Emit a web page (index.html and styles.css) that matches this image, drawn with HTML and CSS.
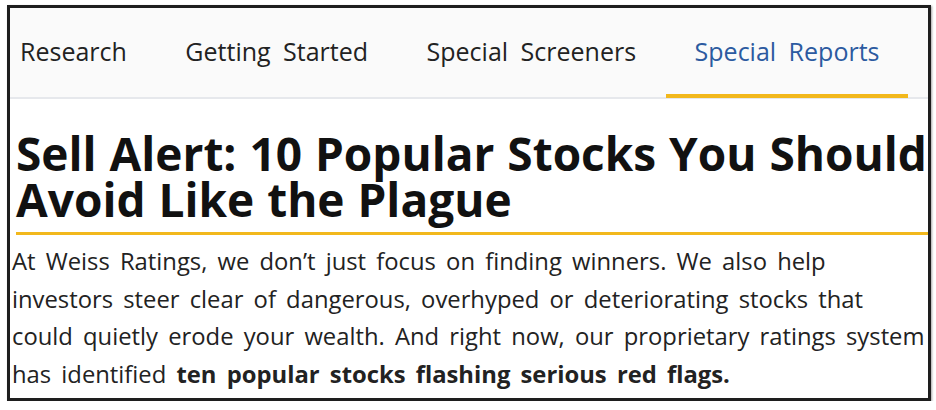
FILE: index.html
```html
<!DOCTYPE html>
<html lang="en">
<head>
    <meta charset="UTF-8">
    <meta name="viewport" content="width=device-width, initial-scale=1.0">
    <title>Sell Alert</title>
    <link rel="stylesheet" href="styles.css">
</head>
<body>

<div class="frame">
    <!-- верхнє меню -->
    <nav class="nav">
        <a class="tab" href="#">Research</a>
        <a class="tab" href="#">Getting Started</a>
        <a class="tab" href="#">Special Screeners</a>
        <a class="tab active" href="#">Special Reports</a>
    </nav>

    <h1 class="title">Sell Alert: 10 Popular Stocks You Should Avoid Like the Plague</h1>

    <p class="intro">At Weiss Ratings, we don’t just focus on finding winners. We also help investors steer clear of dangerous, overhyped or deteriorating stocks that could quietly erode your wealth. And right now, our proprietary ratings system has identified <strong>ten popular stocks flashing serious red flags.</strong></p>
</div>

</body>
</html>
```

FILE: styles.css
```css
body {
    margin: 0;
    background-color: #FFFFFF;
    font-family: "Open Sans", "Noto Sans", sans-serif;
}
.frame {
    margin: 5px 0 0 7px;
    width: 918px;
    height: 390px;
    border: 3px solid #1E1E1E;
    box-shadow: 1px 1px 2px rgba(0, 0, 0, 0.35);
    overflow: hidden;
}
.nav {
    display: flex;
    gap: 58.5px;
    height: 89px;
    padding-left: 10px;
    background-color: #FAFAFA;
    border-bottom: 2px solid #E6E8EC;
}
.tab {
    position: relative;
    display: flex;
    align-items: center;
    padding-bottom: 4px;
    font-size: 25px;
    word-spacing: 6px;
    color: #222222;
    text-decoration: none;
}
.tab.active {
    color: #2C5AA0;
}
/* жовта лінія під активною вкладкою */
.tab.active::after {
    content: "";
    position: absolute;
    left: -29px;
    right: -29px;
    bottom: -1px;
    height: 4px;
    background-color: #F2B81C;
}
.title {
    margin: 0 0 0 6px;
    padding: 31px 0 10px;
    font-size: 46px;
    line-height: 46px;
    font-weight: 700;
    word-spacing: 1px;
    color: #111111;
    border-bottom: 3px solid #F2B81C;
}
.intro {
    margin: 0;
    padding: 8px 0 0 2px;
    font-size: 23.8px;
    line-height: 37.5px;
    word-spacing: 4px;
    color: #222222;
}
.intro strong {
    font-weight: 700;
}
```
